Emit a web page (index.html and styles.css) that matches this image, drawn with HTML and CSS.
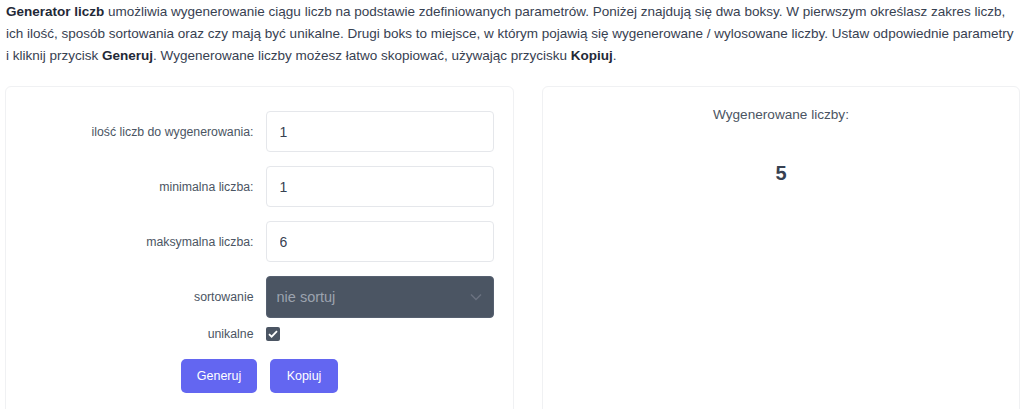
FILE: index.html
```html
<!DOCTYPE html>
<html lang="pl">
<head>
    <meta charset="UTF-8">
    <meta name="viewport" content="width=device-width, initial-scale=1.0">
    <title>Generator liczb</title>
    <link rel="stylesheet" href="styles.css">
</head>
<body>
    <div class="page">
        <p class="intro">
            <strong>Generator liczb</strong> umożliwia wygenerowanie ciągu liczb na podstawie zdefiniowanych parametrów. Poniżej znajdują się dwa boksy. W pierwszym określasz zakres liczb, ich ilość, sposób sortowania oraz czy mają być unikalne. Drugi boks to miejsce, w którym pojawią się wygenerowane / wylosowane liczby. Ustaw odpowiednie parametry i kliknij przycisk <strong>Generuj</strong>. Wygenerowane liczby możesz łatwo skopiować, używając przycisku <strong>Kopiuj</strong>.
        </p>
        <div class="boxes">
            <div class="box box-form">
                <div class="form-row">
                    <label for="count">ilość liczb do wygenerowania:</label>
                    <input type="text" id="count" value="1">
                </div>
                <div class="form-row">
                    <label for="min">minimalna liczba:</label>
                    <input type="text" id="min" value="1">
                </div>
                <div class="form-row">
                    <label for="max">maksymalna liczba:</label>
                    <input type="text" id="max" value="6">
                </div>
                <div class="form-row row-select">
                    <label for="sort">sortowanie</label>
                    <div class="select-wrap">
                        <select id="sort">
                            <option>nie sortuj</option>
                            <option>rosnąco</option>
                            <option>malejąco</option>
                        </select>
                        <svg class="chevron" width="12" height="8" viewBox="0 0 12 8"><path d="M1 1.5l5 5 5-5" fill="none" stroke="#6b7280" stroke-width="1.5"/></svg>
                    </div>
                </div>
                <div class="form-row row-check">
                    <label for="unique">unikalne</label>
                    <span class="check">
                        <svg width="10" height="8" viewBox="0 0 10 8"><path d="M1 4.2l2.6 2.5L9 1.2" fill="none" stroke="#fff" stroke-width="1.8"/></svg>
                    </span>
                </div>
                <div class="buttons">
                    <button id="generate">Generuj</button>
                    <button id="copy">Kopiuj</button>
                </div>
            </div>
            <div class="box box-result">
                <p class="result-title">Wygenerowane liczby:</p>
                <p class="result" id="result">5</p>
            </div>
        </div>
    </div>
</body>
</html>
```

FILE: styles.css
```css
* {
    margin: 0;
    padding: 0;
    box-sizing: border-box;
    font-family: "Liberation Sans", Arial, sans-serif;
}
body {
    background-color: #fff;
    color: #374151;
}
.page {
    padding: 1px 4px 0 5px;
}
.intro {
    font-size: 13.5px;
    line-height: 22px;
    padding-left: 1px;
}
.intro strong {
    color: #1f2937;
}
.boxes {
    display: grid;
    grid-template-columns: 509fr 478fr;
    gap: 28px;
    margin-top: 19px;
}
.box {
    border: 1px solid #f0f1f3;
    border-radius: 6px;
    min-height: 340px;
}
.box-form {
    padding: 24px 19px;
}
.form-row {
    display: grid;
    grid-template-columns: 1fr 1fr;
    column-gap: 12px;
    align-items: center;
    margin-bottom: 14px;
}
.form-row label {
    text-align: right;
    font-size: 12.3px;
    color: #4b5563;
}
.form-row input {
    height: 41px;
    border: 1px solid #e5e7eb;
    border-radius: 4px;
    padding: 0 13px;
    font-size: 14px;
    color: #374151;
}
.row-select {
    margin-bottom: 9px;
}
.select-wrap {
    position: relative;
}
.select-wrap select {
    width: 100%;
    height: 42px;
    appearance: none;
    background-color: #4b5563;
    border: 1px solid #566070;
    border-radius: 4px;
    padding: 0 10px;
    font-size: 14.5px;
    color: #9ca3af;
}
.chevron {
    position: absolute;
    right: 12px;
    top: 17px;
}
.row-check {
    margin-bottom: 18px;
}
.check {
    display: flex;
    align-items: center;
    justify-content: center;
    width: 14px;
    height: 14px;
    background-color: #4b5563;
    border-radius: 2px;
}
.buttons {
    display: flex;
    justify-content: center;
    gap: 13px;
}
button {
    background-color: #6366f1;
    color: #fff;
    border: none;
    border-radius: 5px;
    height: 34px;
    padding: 0 13px;
    font-size: 12.5px;
    cursor: pointer;
}
#generate {
    width: 76px;
}
#copy {
    width: 68px;
}
button:hover {
    background-color: #4f46e5;
}
.box-result {
    text-align: center;
    padding-top: 20px;
}
.result-title {
    font-size: 13.6px;
    color: #4b5563;
}
.result {
    margin-top: 40px;
    font-size: 20px;
    font-weight: bold;
    color: #374151;
}
```
